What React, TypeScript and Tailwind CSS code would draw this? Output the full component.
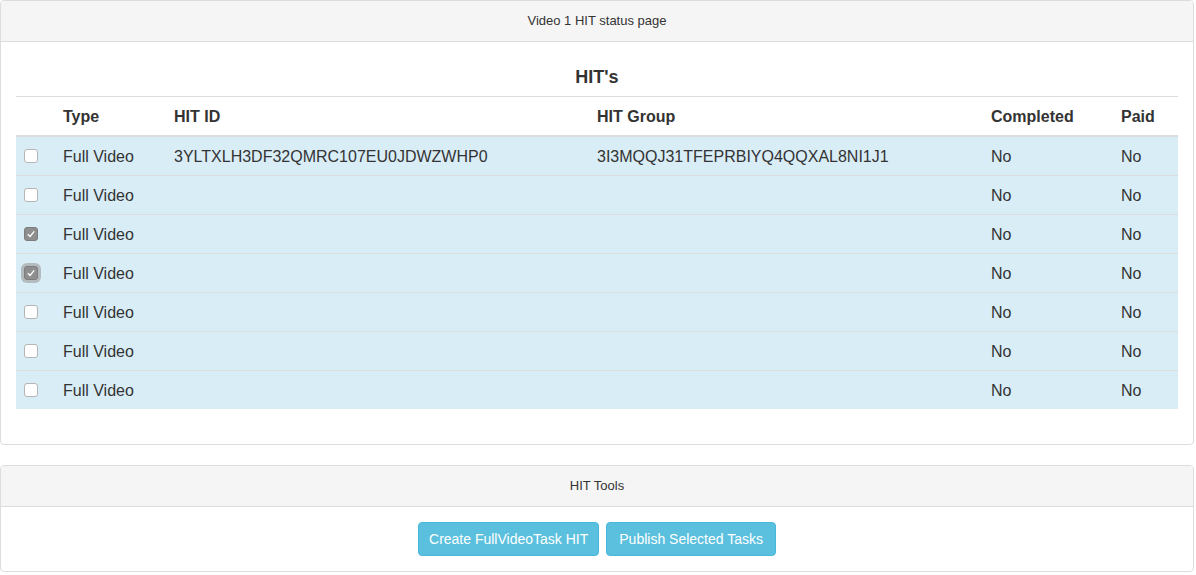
const ROWS = [
  { id: "3YLTXLH3DF32QMRC107EU0JDWZWHP0", group: "3I3MQQJ31TFEPRBIYQ4QQXAL8NI1J1", checked: false, focus: false },
  { id: "", group: "", checked: false, focus: false },
  { id: "", group: "", checked: true, focus: false },
  { id: "", group: "", checked: true, focus: true },
  { id: "", group: "", checked: false, focus: false },
  { id: "", group: "", checked: false, focus: false },
  { id: "", group: "", checked: false, focus: false },
];

const COLS = "grid grid-cols-[39px_111px_423px_394px_130px_65px]";

function Check({ checked, focus }: { checked: boolean; focus: boolean }) {
  return (
    <div
      className={`w-[14px] h-[14px] rounded-[3px] flex items-center justify-center ${
        checked ? "bg-[#8e8e8e] border border-[#7d7d7d]" : "bg-white border border-[#b5b5b5]"
      } ${focus ? "ring-[3px] ring-[#9a9a9a]/60" : ""}`}
    >
      {checked && (
        <svg width="10" height="10" viewBox="0 0 10 10">
          <path d="M1.8 5.3 L4 7.5 L8.2 2.3" fill="none" stroke="white" strokeWidth="1.3" />
        </svg>
      )}
    </div>
  );
}

export default function App() {
  return (
    <div className="w-[1196px] bg-white text-[#333] font-['Liberation_Sans',Arial,sans-serif]">
      <div className="w-[1194px] border border-[#ddd] rounded-[4px] mb-[20px]">
        <div className="h-[41px] bg-[#f5f5f5] border-b border-[#ddd] rounded-t-[3px] flex items-center justify-center text-[13px]">
          Video 1 HIT status page
        </div>
        <div className="px-[15px] pt-[15px] pb-[35px]">
          <div className="h-[39px] flex items-center justify-center text-[18px] font-bold pt-[1px]">HIT's</div>
          <div className="border-t border-[#ddd]">
            <div className={`${COLS} h-[40px] items-center border-b-2 border-[#ddd] text-[16px] font-bold pt-[1px]`}>
              <div />
              <div className="px-[8px]">Type</div>
              <div className="px-[8px]">HIT ID</div>
              <div className="px-[8px]">HIT Group</div>
              <div className="px-[8px]">Completed</div>
              <div className="px-[8px]">Paid</div>
            </div>
            {ROWS.map((r, i) => (
              <div
                key={i}
                className={`${COLS} items-center bg-[#d9edf7] text-[16px] pt-[2px] ${
                  i > 0 ? "h-[39px] border-t border-[#ddd]" : "h-[38px]"
                }`}
              >
                <div className="pl-[8px] -mt-[2px]">
                  <Check checked={r.checked} focus={r.focus} />
                </div>
                <div className="px-[8px]">Full Video</div>
                <div className="px-[8px]">{r.id}</div>
                <div className="px-[8px]">{r.group}</div>
                <div className="px-[8px]">No</div>
                <div className="px-[8px]">No</div>
              </div>
            ))}
          </div>
        </div>
      </div>
      <div className="w-[1194px] border border-[#ddd] rounded-[4px]">
        <div className="h-[41px] bg-[#f5f5f5] border-b border-[#ddd] rounded-t-[3px] flex items-center justify-center text-[13px]">
          HIT Tools
        </div>
        <div className="p-[15px] flex justify-center gap-[7px]">
          <button className="h-[34px] px-[10px] bg-[#5bc0de] border border-[#46b8da] rounded-[4px] text-white text-[14px]">
            Create FullVideoTask HIT
          </button>
          <button className="h-[34px] px-[12px] bg-[#5bc0de] border border-[#46b8da] rounded-[4px] text-white text-[14px]">
            Publish Selected Tasks
          </button>
        </div>
      </div>
    </div>
  );
}
